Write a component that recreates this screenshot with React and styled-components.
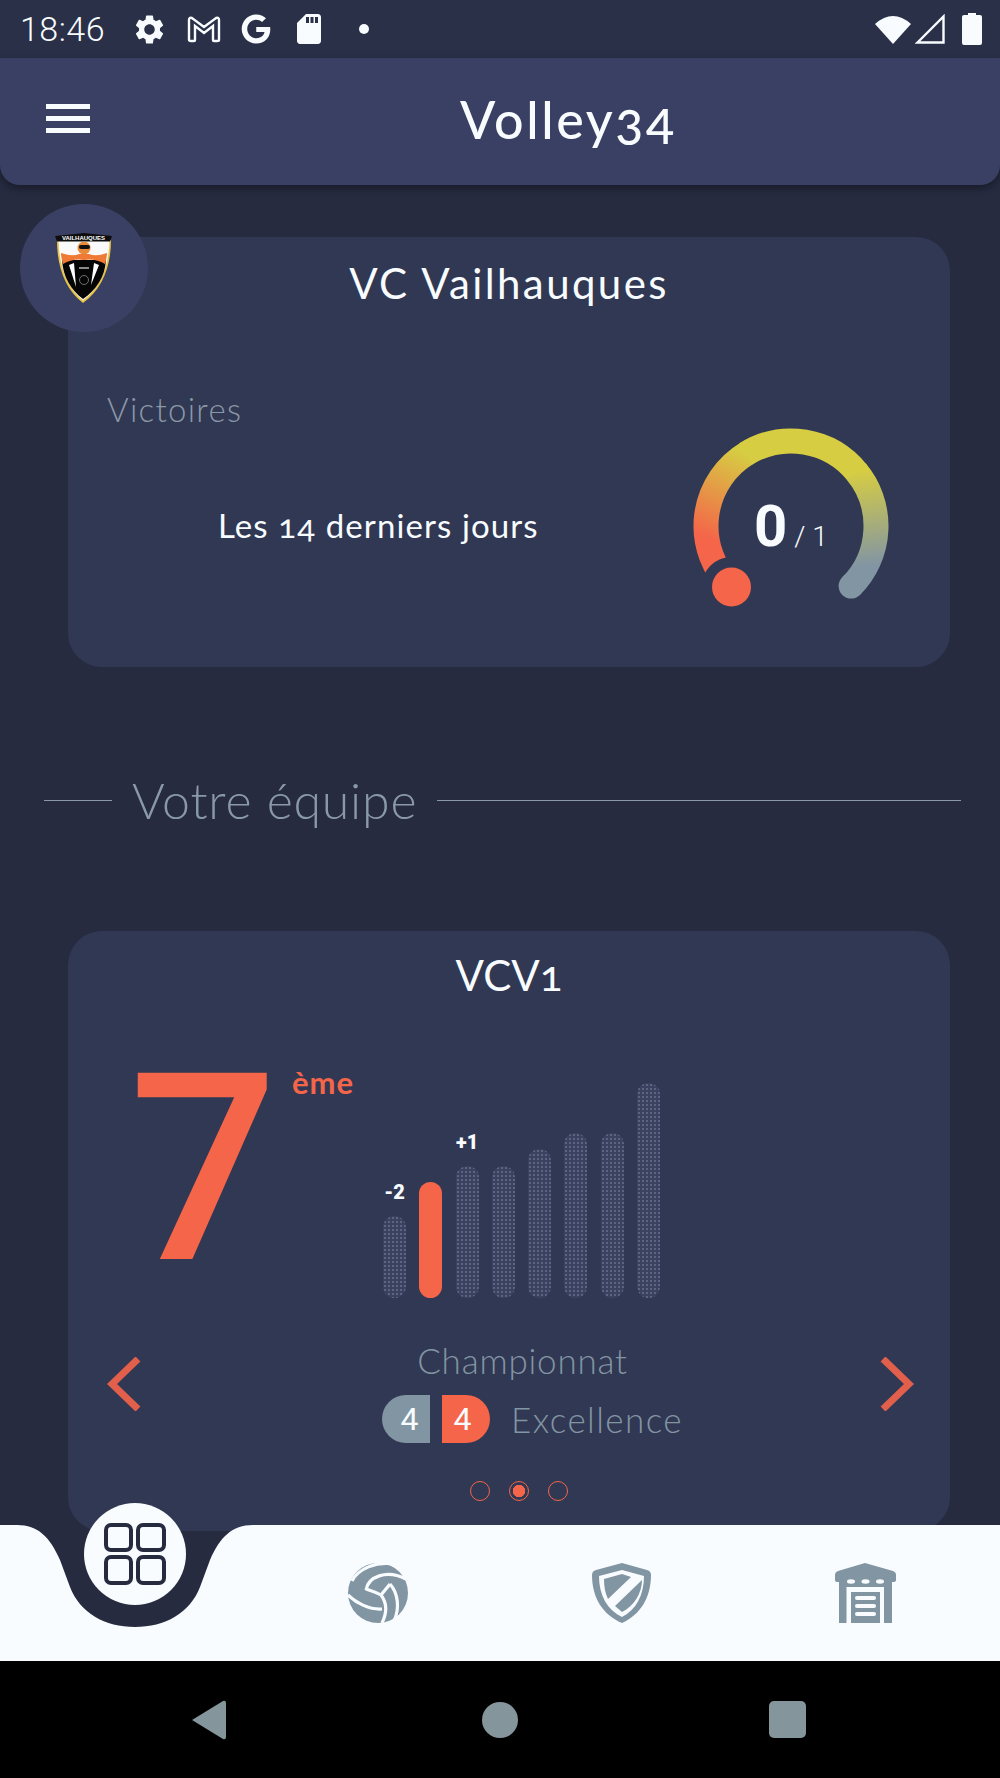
import React from 'react';
import styled, { createGlobalStyle } from 'styled-components';
import { MdSettings, MdSdCard } from 'react-icons/md';
import { FaGoogle } from 'react-icons/fa';

const orange = '#f46549';
const grey = '#8295a3';
const dark = '#262b40';
const cardBg = '#313853';

const GlobalStyle = createGlobalStyle`
  html, body { margin: 0; padding: 0; background: ${dark}; }
  * { box-sizing: border-box; }
`;

const bars = [
  { h: 82, label: '-2' },
  { h: 116, active: true },
  { h: 132, label: '+1' },
  { h: 132 },
  { h: 149 },
  { h: 165 },
  { h: 165 },
  { h: 215 },
];

function polar(deg) {
  const a = (deg * Math.PI) / 180;
  return [110 + 85 * Math.sin(a), 110 - 85 * Math.cos(a)];
}

function arc(from, to) {
  const [x1, y1] = polar(from);
  const [x2, y2] = polar(to);
  return `M${x1} ${y1} A85 85 0 ${to - from > 180 ? 1 : 0} 1 ${x2} ${y2}`;
}

function Gauge() {
  const [ax, ay] = polar(-98);
  const [bx, by] = polar(-32);
  const [cx, cy] = polar(50);
  const [dx, dy] = polar(118);
  const [ex, ey] = polar(135);
  return (
    <GaugeBox>
      <svg width="220" height="220" viewBox="0 0 220 220">
        <defs>
          <linearGradient id="g1" gradientUnits="userSpaceOnUse" x1={ax} y1={ay} x2={bx} y2={by}>
            <stop offset="0" stopColor={orange} />
            <stop offset="1" stopColor="#d6cd43" />
          </linearGradient>
          <linearGradient id="g2" gradientUnits="userSpaceOnUse" x1={cx} y1={cy} x2={dx} y2={dy}>
            <stop offset="0" stopColor="#d6cd43" />
            <stop offset="1" stopColor={grey} />
          </linearGradient>
        </defs>
        <path d={arc(-135, -31)} fill="none" stroke="url(#g1)" strokeWidth="25" />
        <path d={arc(-32, 51)} fill="none" stroke="#d6cd43" strokeWidth="25" />
        <path d={arc(50, 135)} fill="none" stroke="url(#g2)" strokeWidth="25" />
        <circle cx={ex} cy={ey} r="12.5" fill={grey} />
        <circle cx="50.5" cy="171" r="30" fill={cardBg} />
        <circle cx="50.5" cy="171" r="19.5" fill={orange} />
      </svg>
      <GaugeValue>
        <strong>0</strong>
        <span>/ 1</span>
      </GaugeValue>
    </GaugeBox>
  );
}

function Crest() {
  return (
    <svg width="58" height="70" viewBox="0 0 58 70">
      <path d="M2 7 L29 3 L56 7 C56 34 47 56 28 70 C10 56 2 34 2 7 Z" fill="#e8c44a" />
      <path d="M3.5 7 H54.5 C54 34 45 54 28 67.5 C12 54 4 34 3.5 7 Z" fill="#fafafa" />
      <path d="M7 27 H51 C50 44 41 57 28 66 C16 57 8 44 7 27 Z" fill="#050505" />
      <path d="M0 3 L29 0 L57 3 L55 8.5 H2 Z" fill="#0d0d0d" />
      <text x="28.5" y="7.4" textAnchor="middle" fontSize="6" fontWeight="700" fill="#fff" fontFamily="Liberation Sans, sans-serif">VAILHAUQUES</text>
      <circle cx="29" cy="15" r="6.5" fill="#e98a3a" />
      <rect x="24" y="12" width="11" height="4" rx="2" fill="#111" />
      <path d="M6 20 Q18 24 24 21 H34 Q41 24 52 20 C52 24 51 27 50 31 Q40 25 29 27 Q18 25 8 31 C7 27 6 24 6 20 Z" fill="#ee7a35" />
      <path d="M14 32 L19 30 L21 54 Z M44 32 L39 30 L36 52 Z" fill="#fff" />
      <rect x="24" y="34" width="10" height="2" fill="#8a8a8a" />
      <circle cx="29" cy="47" r="4.5" fill="none" stroke="#888" strokeWidth="0.8" />
    </svg>
  );
}

function BallIcon() {
  return (
    <svg width="60" height="60" viewBox="0 0 60 60" fill="none" stroke="#f8fcff" strokeWidth="3.2">
      <circle cx="30" cy="30" r="30" fill={grey} stroke="none" />
      <path d="M33 32 C28 29 23 28 18 26" />
      <path d="M18 27 C20 14 38 6 58 16" />
      <path d="M4 18 C10 6 28 -2 46 1" />
      <path d="M0 32 C8 40 22 47 34 46" />
      <path d="M33 32 C39 40 39 50 34 60" />
      <path d="M33 32 L42 21" />
      <path d="M42 21 C50 30 52 45 46 58" />
    </svg>
  );
}

function ShieldIcon() {
  return (
    <svg width="59" height="60" viewBox="0 0 59 60">
      <path d="M30 0 L55 7 Q59 8 59 12 C59 35 48 52 30 60 C11 52 0 35 0 12 Q0 8 4 7 Z" fill={grey} />
      <path d="M30 7 L52 13 C52 32 44 47 30 54 C15 47 7 32 7 13 Z" fill="#f8fcff" />
      <path d="M12 16 L30 11 L39 14 L16 36 C13 30 12 23 12 16 Z" fill={grey} />
      <path d="M50 17 C50 30 42 43 30 49 L23 43 Z" fill={grey} />
    </svg>
  );
}

function WarehouseIcon() {
  return (
    <svg width="61" height="60" viewBox="0 0 61 60">
      <path d="M30 0 L58 8 Q61 9 61 12 V17 Q61 19 58 19 H57 V60 H49 V24 H11.5 V60 H4 V19 H3 Q0 19 0 17 V12 Q0 9 3 8 Z" fill={grey} />
      <rect x="16" y="29" width="29" height="31" fill={grey} />
      <rect x="20" y="33" width="21" height="4" rx="2" fill="#f8fcff" />
      <rect x="20" y="41" width="21" height="4" rx="2" fill="#f8fcff" />
      <rect x="20" y="49" width="21" height="4" rx="2" fill="#f8fcff" />
      <ellipse cx="16" cy="18.5" rx="4" ry="2.2" fill="#f8fcff" />
      <ellipse cx="30.5" cy="18.5" rx="4" ry="2.2" fill="#f8fcff" />
      <ellipse cx="45" cy="18.5" rx="4" ry="2.2" fill="#f8fcff" />
    </svg>
  );
}

export default function App() {
  return (
    <>
      <GlobalStyle />
      <Screen>
        <StatusBar>
          <StatusLeft>
            <Clock>18:46</Clock>
            <MdSettings size={35} />
            <svg width="34" height="28" viewBox="0 0 34 28">
              <path d="M2 25 V5 Q2 2 5 3 L17 12 L29 3 Q32 2 32 5 V25 Q32 26 30 26 H27 Q26 26 26 25 V11 L17 18 L8 11 V25 Q8 26 7 26 H4 Q2 26 2 25 Z" fill="none" stroke="#f8fcff" strokeWidth="2.4" />
            </svg>
            <FaGoogle size={30} />
            <MdSdCard size={36} />
            <Dot />
          </StatusLeft>
          <StatusRight>
            <svg width="36" height="30" viewBox="0 0 36 30">
              <path d="M0 10 Q18 -6 36 10 L18 30 Z" fill="#f8fcff" />
            </svg>
            <svg width="30" height="30" viewBox="0 0 30 30">
              <path d="M2.5 28.5 L28.5 2.5 V28.5 Z" fill="none" stroke="#f8fcff" strokeWidth="2.4" />
            </svg>
            <svg width="20" height="32" viewBox="0 0 20 32">
              <path d="M6 0 H14 V2 H18 Q20 2 20 4 V30 Q20 32 18 32 H2 Q0 32 0 30 V4 Q0 2 2 2 H6 Z" fill="#f8fcff" />
            </svg>
          </StatusRight>
        </StatusBar>

        <Header>
          <Burger>
            <i />
            <i />
            <i />
          </Burger>
          <AppTitle>Volley34</AppTitle>
        </Header>

        <Main>
          <ClubCard>
            <LogoCircle>
              <Crest />
            </LogoCircle>
            <CardTitle>VC Vailhauques</CardTitle>
            <ClubBody>
              <ClubText>
                <Victoires>Victoires</Victoires>
                <Period>Les 14 derniers jours</Period>
              </ClubText>
              <Gauge />
            </ClubBody>
          </ClubCard>

          <Divider>
            <Rule $w="68px" />
            <DividerText>Votre équipe</DividerText>
            <Rule />
          </Divider>

          <TeamCard>
            <TeamTitle>VCV1</TeamTitle>
            <TeamBody>
              <Rank>
                <Seven>7</Seven>
                <RankSuffix>ème</RankSuffix>
              </Rank>
              <Bars>
                {bars.map((b, i) => (
                  <Bar key={i} $h={b.h} $active={b.active}>
                    {b.label && <BarLabel>{b.label}</BarLabel>}
                  </Bar>
                ))}
              </Bars>
            </TeamBody>
            <Footer>
              <svg width="34" height="54" viewBox="0 0 34 54">
                <path d="M31 2 L5 27 L31 52" fill="none" stroke="#e2604b" strokeWidth="7" />
              </svg>
              <FooterCenter>
                <Competition>Championnat</Competition>
                <LevelRow>
                  <LevelBadge $side="left">4</LevelBadge>
                  <LevelBadge $side="right">4</LevelBadge>
                  <LevelName>Excellence</LevelName>
                </LevelRow>
                <Pager>
                  <PagerDot />
                  <PagerDot $active />
                  <PagerDot />
                </Pager>
              </FooterCenter>
              <svg width="34" height="54" viewBox="0 0 34 54">
                <path d="M3 2 L29 27 L3 52" fill="none" stroke="#e2604b" strokeWidth="7" />
              </svg>
            </Footer>
          </TeamCard>
        </Main>

        <BottomNav>
          <NavShape width="1000" height="136" viewBox="0 0 1000 136">
            <path d="M0 0 H17 C38 0 50 12 60 35 L70 62 C80 88 105 102 135 102 C165 102 190 88 200 62 L210 35 C220 12 232 0 253 0 H1000 V136 H0 Z" fill="#f8fcff" />
          </NavShape>
          <NavSlot>
            <HomeButton>
              <svg width="62" height="62" viewBox="0 0 62 62" fill="none" stroke={dark} strokeWidth="4">
                <rect x="2" y="2" width="25" height="25" rx="5" />
                <rect x="34" y="2" width="26" height="25" rx="5" />
                <rect x="2" y="34" width="25" height="26" rx="5" />
                <rect x="34" y="34" width="26" height="26" rx="5" />
              </svg>
            </HomeButton>
          </NavSlot>
          <NavSlot>
            <BallIcon />
          </NavSlot>
          <NavSlot>
            <ShieldIcon />
          </NavSlot>
          <NavSlot>
            <WarehouseIcon />
          </NavSlot>
        </BottomNav>

        <SystemBar>
          <svg width="36" height="40" viewBox="0 0 36 40">
            <path d="M1 20 L32 1 Q35 0 35 3 V37 Q35 40 32 39 Z" fill="#84959c" />
          </svg>
          <SystemCircle />
          <SystemSquare />
        </SystemBar>
      </Screen>
    </>
  );
}

const Screen = styled.div`
  width: 1000px;
  height: 1778px;
  display: flex;
  flex-direction: column;
  overflow: hidden;
  background: ${dark};
  font-family: "Lato", "Open Sans", sans-serif;
`;

const StatusBar = styled.div`
  height: 58px;
  flex: none;
  display: flex;
  align-items: center;
  justify-content: space-between;
  padding: 0 18px 0 20px;
  background: #2a3047;
  color: #f8fcff;
`;

const StatusLeft = styled.div`
  display: flex;
  align-items: center;
  gap: 20px;
`;

const Clock = styled.span`
  font-family: "Roboto", sans-serif;
  font-size: 34px;
  font-weight: 300;
  letter-spacing: 0.5px;
  width: 92px;
`;

const Dot = styled.span`
  width: 10px;
  height: 10px;
  margin-left: 12px;
  border-radius: 50%;
  background: #f8fcff;
`;

const StatusRight = styled.div`
  display: flex;
  align-items: center;
  gap: 4px;
  svg:last-child {
    margin-left: 13px;
  }
`;

const Header = styled.header`
  height: 127px;
  flex: none;
  display: flex;
  align-items: center;
  padding: 0 0 6px 46px;
  background: #3a4063;
  border-radius: 0 0 20px 20px;
  box-shadow: 0 3px 8px rgba(0, 0, 0, 0.4);
`;

const Burger = styled.div`
  width: 44px;
  display: flex;
  flex-direction: column;
  gap: 7px;
  i {
    display: block;
    height: 5px;
    background: #f8fcff;
  }
`;

const AppTitle = styled.h1`
  margin: 0 0 0 370px;
  font-size: 52px;
  font-weight: 500;
  letter-spacing: 2.6px;
  color: #f8fcff;
  font-feature-settings: "onum";
  white-space: nowrap;
`;

const Main = styled.main`
  flex: 1;
  min-height: 0;
  padding: 52px 50px 0 68px;
`;

const Card = styled.section`
  position: relative;
  background: ${cardBg};
  border-radius: 34px;
`;

const ClubCard = styled(Card)`
  height: 430px;
  padding-top: 22px;
`;

const TeamCard = styled(Card)`
  height: 600px;
  margin-top: 99px;
  padding-top: 20px;
`;

const LogoCircle = styled.div`
  position: absolute;
  left: -48px;
  top: -33px;
  width: 128px;
  height: 128px;
  display: flex;
  align-items: center;
  justify-content: center;
  border-radius: 50%;
  background: #3a4063;
`;

const CardTitle = styled.h2`
  margin: 0;
  font-size: 42px;
  line-height: 48px;
  font-weight: 400;
  letter-spacing: 2.4px;
  text-align: center;
  color: #f8fcff;
  font-feature-settings: "onum";
`;

const TeamTitle = styled(CardTitle)`
  letter-spacing: 0;
`;

const ClubBody = styled.div`
  display: flex;
  justify-content: space-between;
  margin-top: 83px;
  padding: 0 49px 0 39px;
`;

const ClubText = styled.div`
  display: flex;
  flex-direction: column;
`;

const Victoires = styled.div`
  font-size: 33px;
  line-height: 38px;
  font-weight: 300;
  letter-spacing: 1.3px;
  color: #8a99a8;
`;

const Period = styled.div`
  margin: 77px 0 0 111px;
  font-size: 33px;
  line-height: 40px;
  font-weight: 400;
  letter-spacing: 1.1px;
  color: #f8fcff;
  font-feature-settings: "onum";
  white-space: nowrap;
`;

const GaugeBox = styled.div`
  position: relative;
  width: 220px;
  height: 220px;
  margin-top: 26px;
`;

const GaugeValue = styled.div`
  position: absolute;
  left: 73px;
  top: 76px;
  display: flex;
  align-items: baseline;
  gap: 7px;
  font-family: "Roboto", sans-serif;
  color: #f8fcff;
  strong {
    font-size: 58px;
    font-weight: 700;
    line-height: 68px;
  }
  span {
    font-size: 28px;
    font-weight: 300;
  }
`;

const Divider = styled.div`
  display: flex;
  align-items: center;
  gap: 20px;
  height: 64px;
  margin: 101px -11px 0 -24px;
`;

const Rule = styled.div`
  height: 1px;
  flex: ${(p) => (p.$w ? `0 0 ${p.$w}` : '1')};
  background: #8a99a8;
`;

const DividerText = styled.span`
  font-size: 50px;
  font-weight: 300;
  letter-spacing: 0.8px;
  color: #8a99a8;
  white-space: nowrap;
`;

const TeamBody = styled.div`
  display: flex;
  height: 258px;
  margin-top: 41px;
`;

const Rank = styled.div`
  display: flex;
  align-items: flex-start;
  width: 315px;
  padding-left: 61px;
`;

const Seven = styled.span`
  font-family: "Roboto", sans-serif;
  font-size: 262px;
  font-weight: 500;
  line-height: 260px;
  color: ${orange};
`;

const RankSuffix = styled.span`
  margin: 24px 0 0 14px;
  font-size: 31px;
  line-height: 36px;
  font-weight: 700;
  letter-spacing: 1px;
  color: ${orange};
`;

const Bars = styled.div`
  display: flex;
  align-items: flex-end;
  gap: 13.3px;
`;

const Bar = styled.div`
  position: relative;
  width: 23px;
  height: ${(p) => p.$h}px;
  border-radius: 11.5px;
  background-color: ${(p) => (p.$active ? orange : '#3b4160')};
  background-image: ${(p) =>
    p.$active ? 'none' : 'radial-gradient(#5f6682 0.7px, transparent 0.9px)'};
  background-size: 4px 4px;
`;

const BarLabel = styled.span`
  position: absolute;
  left: -4px;
  right: -4px;
  top: -34px;
  font-family: "Roboto", sans-serif;
  font-size: 20px;
  line-height: 20px;
  font-weight: 900;
  text-align: center;
  color: #f8fcff;
`;

const Footer = styled.div`
  display: flex;
  align-items: flex-start;
  justify-content: space-between;
  margin-top: 42px;
  padding: 17px 36px 0 39px;
`;

const FooterCenter = styled.div`
  flex: 1;
  display: flex;
  flex-direction: column;
  align-items: center;
  margin-top: -17px;
  padding-left: 24px;
`;

const Competition = styled.div`
  font-size: 35px;
  line-height: 40px;
  font-weight: 300;
  letter-spacing: 0.8px;
  color: ${grey};
`;

const LevelRow = styled.div`
  display: flex;
  align-items: center;
  margin: 15px 0 0 20px;
`;

const LevelBadge = styled.div`
  width: 48px;
  height: 48px;
  margin-right: 12px;
  padding: ${(p) => (p.$side === 'left' ? '0 0 0 7px' : '0 7px 0 0')};
  display: flex;
  align-items: center;
  justify-content: center;
  font-family: "Roboto", sans-serif;
  font-size: 32px;
  color: #f8fcff;
  background: ${(p) => (p.$side === 'left' ? grey : orange)};
  border-radius: ${(p) => (p.$side === 'left' ? '24px 0 0 24px' : '0 24px 24px 0')};
`;

const LevelName = styled.div`
  margin-left: 9px;
  font-size: 35px;
  line-height: 48px;
  font-weight: 300;
  letter-spacing: 1.4px;
  color: ${grey};
`;

const Pager = styled.div`
  display: flex;
  gap: 19px;
  margin: 38px 8px 0 0;
`;

const PagerDot = styled.div`
  width: 20px;
  height: 20px;
  border: 1.5px solid ${orange};
  border-radius: 50%;
  background: ${(p) =>
    p.$active ? `radial-gradient(${orange} 6px, transparent 6.5px)` : 'transparent'};
`;

const BottomNav = styled.nav`
  position: relative;
  height: 136px;
  flex: none;
  display: grid;
  grid-template-columns: repeat(4, 1fr);
  padding: 0 13px;
  margin-top: -6px;
`;

const NavShape = styled.svg`
  position: absolute;
  left: 0;
  top: 0;
`;

const NavSlot = styled.div`
  position: relative;
  display: flex;
  align-items: center;
  justify-content: center;
`;

const HomeButton = styled.div`
  width: 102px;
  height: 102px;
  margin-top: -22px;
  align-self: flex-start;
  display: flex;
  align-items: center;
  justify-content: center;
  border-radius: 50%;
  background: #f8fcff;
`;

const SystemBar = styled.div`
  height: 117px;
  flex: none;
  display: flex;
  align-items: center;
  background: #000;
  padding: 0 194px 0 191px;
  justify-content: space-between;
`;

const SystemCircle = styled.div`
  width: 36px;
  height: 36px;
  margin-left: 4px;
  border-radius: 50%;
  background: #84959c;
`;

const SystemSquare = styled.div`
  width: 37px;
  height: 37px;
  border-radius: 5px;
  background: #84959c;
`;
